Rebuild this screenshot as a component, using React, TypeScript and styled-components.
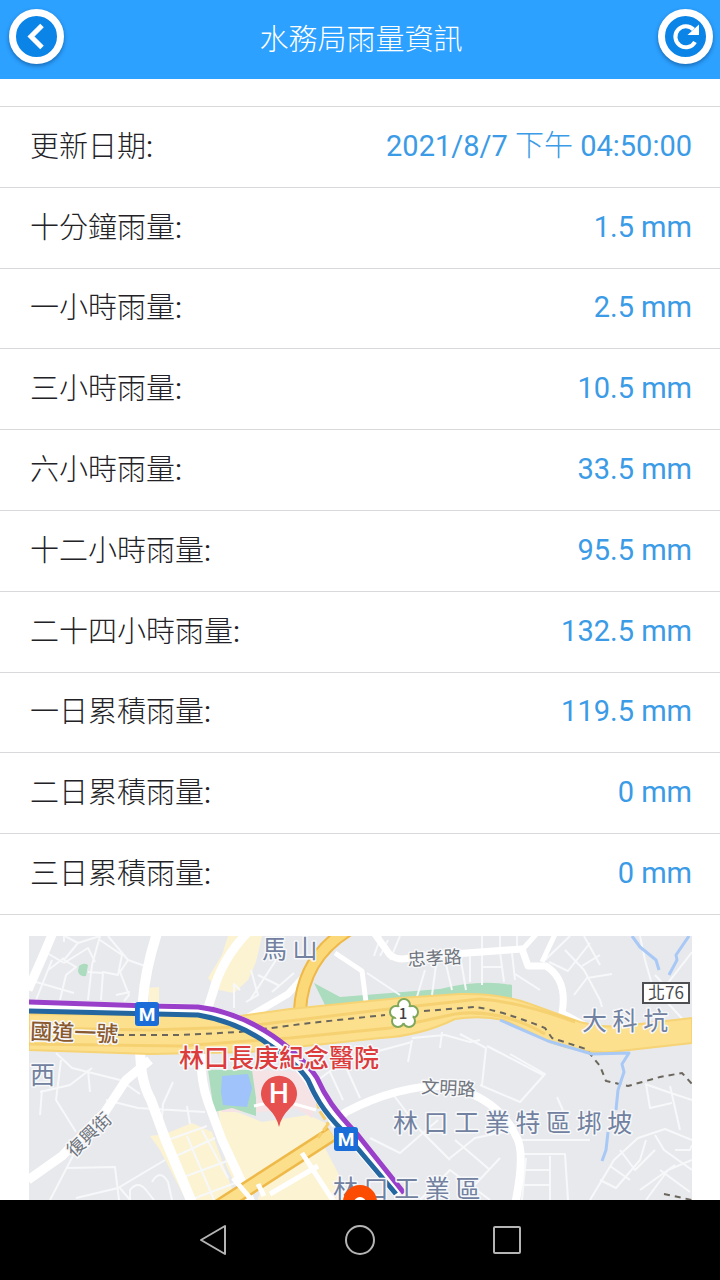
import React from "react";
import styled, { createGlobalStyle } from "styled-components";

const GlobalStyle = createGlobalStyle`
  * { box-sizing: border-box; }
  body {
    margin: 0;
    background: #fff;
    font-family: Roboto, "Noto Sans CJK TC", sans-serif;
  }
`;

const Screen = styled.div`
  display: flex;
  flex-direction: column;
  height: 100vh;
`;

const Header = styled.header`
  display: flex;
  flex: none;
  align-items: flex-start;
  height: 79px;
  padding: 9px 7px 0 9px;
  background: #2ca1ff;
`;

const Title = styled.h1`
  flex: 1;
  margin: 0;
  color: #fff;
  font-size: 29px;
  font-weight: 300;
  line-height: 62px;
  text-align: center;
`;

const RoundButton = styled.button`
  display: flex;
  align-items: center;
  justify-content: center;
  width: 55px;
  height: 55px;
  padding: 0;
  border: 7px solid #fff;
  border-radius: 50%;
  background: #0b84e8;
  box-shadow: 0 2px 4px rgba(0, 40, 90, 0.45);
  cursor: pointer;
`;

const Content = styled.main`
  display: flex;
  flex: 1;
  flex-direction: column;
  gap: 21px;
  min-height: 0;
  padding-top: 27px;
  overflow-y: auto;
  scrollbar-width: none;
`;

const Readings = styled.table`
  flex: none;
  width: 100%;
  height: 809px;
  border-top: 1px solid #d9d9dc;
  border-spacing: 0;
  font-size: 29px;
  line-height: 40px;
`;

const Label = styled.th`
  padding: 0 0 0 30px;
  border-bottom: 1px solid #d9d9dc;
  color: #222226;
  font-weight: 300;
  text-align: left;
`;

const Colon = styled.span`
  font-weight: 400;
`;

const Value = styled.td`
  padding: 0 28px 2px 0;
  border-bottom: 1px solid #d9d9dc;
  color: #3b9be6;
  font-weight: 400;
  text-align: right;
`;

const LightText = styled.span`
  font-weight: 300;
`;

const MapFrame = styled.section`
  flex: 1;
  min-height: 200px;
  margin: 0 28px 0 29px;
  overflow: hidden;
`;

const MapDrawing = styled.svg`
  display: block;
  width: 100%;
  height: 100%;
  font-family: "Noto Sans CJK TC", sans-serif;
`;

const MapLabel = styled.text<{ $size: number; $tone: string; $weight?: number }>`
  fill: ${(p) => p.$tone};
  font-size: ${(p) => p.$size}px;
  font-weight: ${(p) => p.$weight ?? 400};
  stroke: #f7f8fa;
  stroke-width: 3px;
  stroke-linejoin: round;
  paint-order: stroke;
`;

const SystemBar = styled.nav`
  display: flex;
  flex: none;
  align-items: center;
  justify-content: center;
  gap: 99px;
  height: 80px;
  background: #000;
`;

const SystemButton = styled.button`
  display: flex;
  align-items: center;
  justify-content: center;
  width: 48px;
  height: 48px;
  padding: 0;
  border: 0;
  background: none;
  cursor: pointer;
`;

const readings: { label: string; value: React.ReactNode }[] = [
  { label: "更新日期", value: <>2021/8/7 <LightText>下午</LightText> 04:50:00</> },
  { label: "十分鐘雨量", value: "1.5 mm" },
  { label: "一小時雨量", value: "2.5 mm" },
  { label: "三小時雨量", value: "10.5 mm" },
  { label: "六小時雨量", value: "33.5 mm" },
  { label: "十二小時雨量", value: "95.5 mm" },
  { label: "二十四小時雨量", value: "132.5 mm" },
  { label: "一日累積雨量", value: "119.5 mm" },
  { label: "二日累積雨量", value: "0 mm" },
  { label: "三日累積雨量", value: "0 mm" },
];

const town = "#71819f";
const street = "#70757d";

function MetroBadge({ x, y }: { x: number; y: number }) {
  return (
    <g>
      <rect x={x - 12} y={y - 12} width="24" height="24" rx="3" fill="#1a6dd8" />
      <text x={x} y={y + 7} fill="#fff" fontSize="19" fontWeight="700" fontFamily="Roboto, sans-serif" textAnchor="middle">M</text>
    </g>
  );
}

function AreaMap() {
  return (
    <MapDrawing viewBox="29 936 663 264" preserveAspectRatio="xMidYMin slice" role="img" aria-label="雨量站地圖">
      <rect x="29" y="936" width="663" height="900" fill="#e8e9ed" />

      {/* blocks, parks and water */}
      <g fill="#fcf3d2">
        <path d="M228 936H262L256 962L248 980L234 993L219 990L208 978L222 955Z" />
        <path d="M148 988L159 987V1004H149Z" />
        <path d="M218 1108L240 1113L262 1122L308 1115L328 1124L322 1142L236 1186L226 1165Z" />
        <path d="M165 1134L192 1123L212 1132L236 1200H186L160 1150L150 1136Z" />
        <path d="M300 1158L324 1146L352 1200H258L262 1184Z" />
      </g>
      <path d="M252 1070L303 1072L316 1104L312 1118L296 1108L262 1112L222 1112L219 1108L254 1098Z" fill="#f6e3e5" />
      <path d="M208 1070H252L256 1098V1116L244 1112L232 1108L214 1112Z" fill="#abdcbd" />
      <path d="M222 1076L248 1074L252 1088L247 1107L223 1105L221 1092Z" fill="#9fc3fa" />
      <path d="M79 966Q84 962 88 965L86 976Q79 977 78 971Z" fill="#abdcbd" />
      <path d="M314 983L340 997L440 989Q480 979 512 985V1006L330 1015Z" fill="#abdcbd" />

      {/* small streets */}
      <g fill="none" stroke="#f7f8fa" strokeWidth="2" strokeLinejoin="round">
        <path d="M42 950L64 963M65 936L78 943L100 936M78 943L64 960L76 967L66 975L60 1000M64 936V942M64 963L88 948L95 962M52 960L36 1000M36 982L74 993M48 970L64 958" />
        <path d="M100 936L92 965L88 1000M100 940L122 955L118 975L103 972L101 1000M108 936L128 960L145 966M128 960L120 972L129 995L124 1001M88 972L103 973M116 995L130 992" />
        <path d="M56 1053L72 1068L120 1080L140 1094M61 1060L56 1100L76 1132M40 1092L70 1085L92 1068M88 1070L90 1092M42 1090L40 1115M106 1100L138 1108L205 1112M173 1082L163 1104L161 1130M187 1106L190 1124" />
        <path d="M76 1150L50 1200M67 1168L115 1167L119 1200M76 1198L118 1188L165 1160M120 1188L130 1200M130 1200V1190Q138 1180 146 1190L154 1200M152 1182Q160 1168 168 1182L172 1200" />
        <path d="M168 1140L207 1126M174 1157L215 1138M181 1178L230 1160M190 1200L238 1182M187 1136L214 1200M202 1130L228 1178" />
        <path d="M240 990L234 984V1008M251 970L258 995L246 1002M276 960L250 1000M294 973L272 992M258 975L280 986" />
        <path d="M374 956L381 936M388 940L380 956M367 973L400 995M400 936L390 960M425 970L416 1000M436 965L432 995M445 960L452 990M460 955L466 990M470 955V982M482 936V985M500 952L504 982M512 953L515 980M515 974L540 990M482 967H502" />
        <path d="M500 936V952M517 936V951M549 962L568 971L590 943M545 960L570 936M565 950L584 970L600 1000L602 1007M574 995L587 978L612 974M582 966L600 955M584 936L600 965" />
        <path d="M640 936L645 960L653 988L665 1000L688 1025M664 988L692 952M655 975L678 1000" />
        <path d="M412 1040L408 1062M412 1038L445 1035L470 1042L480 1040M442 1032L440 1048M460 1034L486 1048L482 1085M487 1046L543 1075M480 1085L520 1102L545 1074L510 1054M557 1097L565 1115" />
        <path d="M330 1072L343 1100M345 1065L360 1098M318 1080L345 1060L412 1042M392 1093L420 1130L450 1160M438 1120L400 1153L370 1138M455 1140L490 1170M450 1158L475 1138L514 1130M470 1190L500 1158M420 1200L450 1170L490 1200" />
        <path d="M520 1140H590M524 1154H565L568 1200M524 1170H550M522 1185H550M550 1156V1200M526 1158L522 1200" />
        <path d="M590 1200L614 1160L638 1138L665 1129L692 1140M600 1180L616 1188L640 1160L646 1140M620 1150L635 1170L655 1150M610 1166L630 1180M655 1135L664 1150L692 1170M646 1200L668 1170L692 1160M660 1170L690 1192M640 1190L675 1165M675 1150L690 1150L692 1145" />
        <path d="M645 1084L668 1092L692 1100M646 1084L650 1108L672 1103M670 1086L680 1130" />
      </g>

      {/* main streets */}
      <g fill="none" stroke="#fff" strokeLinejoin="round">
        <path d="M54 930L43 956L28 990" strokeWidth="9" />
        <path d="M158 930Q145 970 143 1000L141 1030Q137 1075 151 1100L166 1141L193 1205" strokeWidth="10" />
        <path d="M250 930Q222 958 213 992L204 1020Q196 1068 208 1102L222 1140L250 1200" strokeWidth="9" />
        <path d="M28 1180L62 1156L105 1112L126 1080L150 1060" strokeWidth="9" />
        <path d="M308 972L288 994L240 1022" strokeWidth="7" />
        <path d="M330 1124L346 1112Q400 1084 450 1086Q500 1100 516 1136Q526 1152 515 1205" strokeWidth="8" />
        <path d="M372 930L390 955Q400 962 412 957L522 949L528 966L546 966Q568 980 562 1013L584 1025" strokeWidth="7" />
        <path d="M557 930L542 962M335 953L362 971L366 1002M522 950L540 930" strokeWidth="5" />
        <path d="M254 1106L280 1100L316 1110" strokeWidth="3" />
      </g>

      {/* expressway and its branches */}
      <g fill="none">
        <path d="M348 930Q303 958 300 1010" stroke="#eeb949" strokeWidth="14" />
        <path d="M348 930Q303 958 300 1010" stroke="#fcd978" strokeWidth="10" />
        <path d="M214 1210L332 1134" stroke="#eeb949" strokeWidth="16" />
        <path d="M214 1210L332 1134" stroke="#fcdf8b" strokeWidth="11" />
        <path d="M314 1086L319 1110L328 1124L318 1138" stroke="#f6cf6c" strokeWidth="3" strokeDasharray="10 3" />
        <path d="M233 1178L262 1212M302 1153L334 1202M258 1184L264 1196M270 1194L318 1166" stroke="#fff" strokeWidth="5" />
      </g>
      <path d="M29 1014L240 1016L290 1009L400 998L460 994Q500 993 530 1004L580 1022Q610 1030 640 1024L692 1018V1043L620 1051Q590 1056 550 1042L504 1020Q480 1015 455 1019Q420 1036 380 1038L250 1052L150 1054L29 1050Z" fill="#fce08e" stroke="#f6d374" strokeWidth="2" />
      <g fill="none" stroke="#f4ca65" strokeWidth="3">
        <path d="M29 1028L150 1030L240 1027L380 1010L480 999Q520 1002 575 1022" opacity="0.7" />
        <path d="M29 1044L180 1046L290 1038L390 1028L455 1014Q500 1008 545 1034" opacity="0.7" />
      </g>
      <g fill="none" stroke="#6b665c" strokeWidth="2" strokeDasharray="6 5">
        <path d="M118 1035L180 1035L240 1032L310 1023L385 1015M424 1011L475 1007Q500 1010 545 1028L552 1038L586 1049L600 1066L606 1081L628 1086L660 1077L682 1073L692 1084" />
        <path d="M664 1194L692 1200" />
      </g>
      <g fill="none" stroke="#a8c8f6" strokeWidth="3" strokeLinejoin="round">
        <path d="M632 936L640 947L656 960L659 970M689 936L676 955L677 960L669 975" />
        <path d="M500 1020L548 1041L592 1054L629 1053L622 1064L624 1072L618 1090L616 1110" />
        <path d="M608 1132L606 1150L602 1161" />
      </g>

      {/* metro lines */}
      <g fill="none" strokeLinejoin="round">
        <path d="M29 1006L195 1010Q240 1015 273 1042Q300 1062 314 1086Q324 1108 345 1130L400 1194" stroke="#fff" strokeWidth="12" />
        <path d="M29 1002L150 1006L198 1007Q238 1012 273 1036Q304 1058 317 1078C325 1096 334 1110 357 1134L404 1193" stroke="#9a3fc9" strokeWidth="5" />
        <path d="M29 1011L198 1015Q238 1022 268 1044Q296 1062 308 1080C314 1094 322 1110 342 1130L396 1194" stroke="#2366a0" strokeWidth="5" />
      </g>
      <MetroBadge x={147} y={1014} />
      <MetroBadge x={346} y={1139} />

      {/* place names */}
      <MapLabel x="262" y="958" $size={25} $tone={town}>馬 山</MapLabel>
      <MapLabel x="582" y="1030" $size={25} $tone={town}>大 科 坑</MapLabel>
      <MapLabel x="30" y="1084" $size={25} $tone={town}>西</MapLabel>
      <MapLabel x="393" y="1132" $size={25} $tone={town}>林 口 工 業 特 區 垹 坡</MapLabel>
      <MapLabel x="333" y="1198" $size={25} $tone={town}>林 口 工 業 區</MapLabel>
      <MapLabel x="408" y="966" $size={18} $tone={street} transform="rotate(-3 408 966)">忠孝路</MapLabel>
      <MapLabel x="421" y="1093" $size={18} $tone={street} transform="rotate(3 421 1093)">文明路</MapLabel>
      <MapLabel x="74" y="1158" $size={18} $tone={street} transform="rotate(-44 74 1158)">復興街</MapLabel>
      <MapLabel x="30" y="1039" $size={22} $tone="#8a5a2e" $weight={500} transform="rotate(2 30 1039)">國道一號</MapLabel>
      <MapLabel x="179" y="1067" $size={25} $tone="#dc3c3c" $weight={500}>林口長庚紀念醫院</MapLabel>

      {/* route shields */}
      <rect x="643" y="983" width="46" height="20" fill="#fff" stroke="#4d4f52" strokeWidth="2" />
      <text x="666" y="999" fill="#4a4c50" fontSize="17" textAnchor="middle">北76</text>
      <g fill="#fff" stroke="#7fa75b" strokeWidth="2">
        <circle cx="404" cy="1005" r="6" />
        <circle cx="412" cy="1012" r="6" />
        <circle cx="409" cy="1021" r="6" />
        <circle cx="398" cy="1021" r="6" />
        <circle cx="396" cy="1012" r="6" />
      </g>
      <circle cx="404" cy="1014" r="9" fill="#fff" />
      <text x="403" y="1019" fill="#3f4144" fontSize="15" fontWeight="500" textAnchor="middle">1</text>

      {/* hospital pin and station marker */}
      <path d="M279 1127Q277 1117 268 1108A18 18 0 1 1 290 1108Q281 1117 279 1127Z" fill="#e6504e" />
      <text x="279" y="1103" fill="#fff" fontSize="28" fontWeight="500" fontFamily="Roboto, sans-serif" textAnchor="middle">H</text>
      <path d="M343 1202A17 17 0 0 1 377 1202Q377 1212 360 1236Q343 1212 343 1202Z" fill="#fc4c02" />
      <circle cx="360" cy="1203" r="6" fill="#fff" />
    </MapDrawing>
  );
}

export default function App() {
  return (
    <Screen>
      <GlobalStyle />
      <Header>
        <RoundButton aria-label="返回">
          <svg width="41" height="41" viewBox="0 0 41 41" fill="none" stroke="#fff" strokeWidth="5">
            <path d="M26 9.5L15 20.5L26 31.5" />
          </svg>
        </RoundButton>
        <Title>水務局雨量資訊</Title>
        <RoundButton aria-label="重新整理">
          <svg width="41" height="41" viewBox="0 0 41 41" fill="none">
            <path d="M28.5 13.5A10.5 10.5 0 1 0 30 26" stroke="#fff" strokeWidth="4" />
            <path d="M34 8.5V19H22.5Z" fill="#fff" />
          </svg>
        </RoundButton>
      </Header>
      <Content>
        <Readings>
          <tbody>
            {readings.map((r) => (
              <tr key={r.label}>
                <Label scope="row">{r.label}<Colon>:</Colon></Label>
                <Value>{r.value}</Value>
              </tr>
            ))}
          </tbody>
        </Readings>
        <MapFrame>
          <AreaMap />
        </MapFrame>
      </Content>
      <SystemBar aria-label="系統導覽">
        <SystemButton aria-label="上一頁">
          <svg width="32" height="32" viewBox="0 0 32 32" fill="none" stroke="#b4b4b4" strokeWidth="2" strokeLinejoin="round">
            <path d="M28 2V30L4 16Z" />
          </svg>
        </SystemButton>
        <SystemButton aria-label="主畫面">
          <svg width="32" height="32" viewBox="0 0 32 32" fill="none" stroke="#b4b4b4" strokeWidth="2">
            <circle cx="16" cy="16" r="14" />
          </svg>
        </SystemButton>
        <SystemButton aria-label="最近使用">
          <svg width="32" height="32" viewBox="0 0 32 32" fill="none" stroke="#b4b4b4" strokeWidth="2">
            <rect x="3" y="3" width="26" height="26" rx="1" />
          </svg>
        </SystemButton>
      </SystemBar>
    </Screen>
  );
}
